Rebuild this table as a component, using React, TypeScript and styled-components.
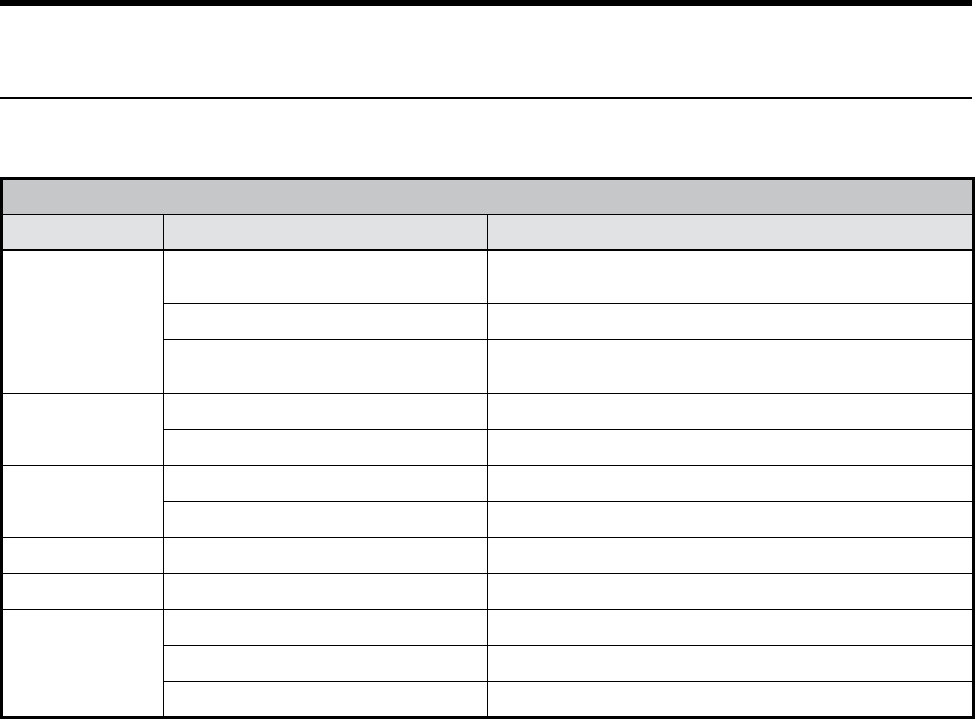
import React from "react";
import styled, { createGlobalStyle } from "styled-components";

const Global = createGlobalStyle`
  html, body { margin: 0; padding: 0; background: #ffffff; }
  body { font-family: "Liberation Sans", Arial, sans-serif; }
  * { box-sizing: border-box; }
`;

const Page = styled.div`
  width: 975px;
  height: 719px;
  display: flex;
  flex-direction: column;
  overflow: hidden;
`;

const TopBar = styled.div`
  width: 972px;
  height: 6px;
  background: #000;
  flex: none;
`;

const TitleArea = styled.div`
  height: 91px;
  flex: none;
`;

const Rule = styled.div`
  width: 972px;
  height: 2px;
  background: #000;
  flex: none;
`;

const Spacer = styled.div`
  height: 78px;
  flex: none;
`;

const Grid = styled.div<{ $rows: string }>`
  display: grid;
  grid-template-columns: 160px 323px 484px;
  grid-template-rows: ${(p) => p.$rows};
  gap: 1px;
  background: #000;
  border: 3px solid #000;
  width: 975px;
  flex: none;
`;

const TitleCell = styled.div`
  grid-column: 1 / -1;
  background: #c6c7c8;
`;

const HeadCell = styled.div`
  background: #e1e2e3;
  border-bottom: 1px solid #000;
`;

const GroupCell = styled.div<{ $span: number }>`
  grid-column: 1;
  grid-row: span ${(p) => p.$span};
  background: #fff;
`;

const Cell = styled.div<{ $col: number }>`
  grid-column: ${(p) => p.$col};
  background: #fff;
`;

const groups: { rows: number[] }[] = [
  { rows: [52, 35, 53] },
  { rows: [35, 35] },
  { rows: [35, 35] },
  { rows: [35] },
  { rows: [35] },
  { rows: [35, 35, 34] },
];

export default function App() {
  const bodyRows = groups.flatMap((g) => g.rows);
  const rowTemplate = ["34px", "35px", ...bodyRows.map((h) => `${h}px`)].join(" ");
  return (
    <>
      <Global />
      <Page>
        <TopBar />
        <TitleArea />
        <Rule />
        <Spacer />
        <Grid $rows={rowTemplate}>
          <TitleCell />
          <HeadCell />
          <HeadCell />
          <HeadCell />
          {groups.map((g, gi) => (
            <React.Fragment key={gi}>
              <GroupCell $span={g.rows.length} />
              {g.rows.map((_, ri) => (
                <React.Fragment key={ri}>
                  <Cell $col={2} />
                  <Cell $col={3} />
                </React.Fragment>
              ))}
            </React.Fragment>
          ))}
        </Grid>
      </Page>
    </>
  );
}
